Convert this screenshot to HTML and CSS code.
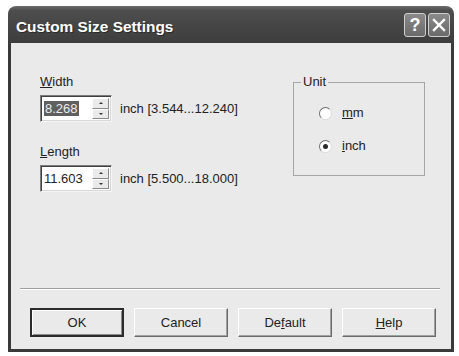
FILE: index.html
```html
<!DOCTYPE html>
<html lang="en">
<head>
  <meta charset="UTF-8" />
  <title>Custom Size Settings</title>
  <link rel="stylesheet" href="styles.css">
</head>
<body>
  <div class="window">
    <div class="titlebar">
      <span class="title">Custom Size Settings</span>
      <div class="caption-buttons">
        <span class="cap-btn help">?</span>
        <span class="cap-btn close">
          <svg width="14" height="14" viewBox="0 0 14 14"><path d="M2 2 L12 12 M12 2 L2 12" stroke="#fff" stroke-width="2.4" stroke-linecap="square"/></svg>
        </span>
      </div>
    </div>

    <div class="client">
      <div class="top">
        <div class="fields">
          <div class="label"><u>W</u>idth</div>
          <div class="field-row">
            <div class="spin-box">
              <span class="value selected">8.268</span>
              <div class="spinner"><span class="arrow up"></span><span class="arrow down"></span></div>
            </div>
            <span class="range">inch [3.544...12.240]</span>
          </div>

          <div class="label second"><u>L</u>ength</div>
          <div class="field-row">
            <div class="spin-box">
              <span class="value">11.603</span>
              <div class="spinner"><span class="arrow up"></span><span class="arrow down"></span></div>
            </div>
            <span class="range">inch [5.500...18.000]</span>
          </div>
        </div>

        <fieldset class="unit">
          <legend>Unit</legend>
          <div class="radio-row"><span class="radio"></span><span><u>m</u>m</span></div>
          <div class="radio-row"><span class="radio checked"></span><span><u>i</u>nch</span></div>
        </fieldset>
      </div>

      <div class="separator"></div>

      <div class="buttons">
        <button class="btn default-btn">OK</button>
        <button class="btn">Cancel</button>
        <button class="btn">De<u>f</u>ault</button>
        <button class="btn"><u>H</u>elp</button>
      </div>
    </div>
  </div>
</body>
</html>
```

FILE: styles.css
```css
body { margin: 0; background: #fff; font-family: "Liberation Sans", Arial, sans-serif; font-size: 13px; color: #222; }

.window { margin: 6px 0 0 8px; width: 446px; height: 346px; display: flex; flex-direction: column; }

.titlebar { height: 37px; flex: none; display: flex; justify-content: space-between; align-items: flex-start; padding: 0 4px 0 8px; border-radius: 8px 8px 0 0; background: linear-gradient(#6c6c6c 0, #4e4e4e 12%, #464646 50%, #3d3d3d 100%); }
.title { margin-top: 12px; color: #fff; font-weight: bold; font-size: 15.4px; line-height: 18px; text-shadow: 1px 1px 0 #2a2a2a; }
.caption-buttons { display: flex; gap: 2px; margin-top: 7px; }
.cap-btn { width: 22px; height: 24px; box-sizing: border-box; border: 1px solid #cfcfcf; border-radius: 3px; background: linear-gradient(#8a8a8a, #6a6a6a); display: flex; align-items: center; justify-content: center; color: #fff; font-weight: bold; font-size: 18px; }

.client { flex: 1; display: flex; flex-direction: column; background: #eaeaea; border: 3px solid #3a3a3a; border-top: none; }

.top { flex: 1; display: flex; padding: 31px 0 0 29px; }
.fields { width: 253px; }
.label { line-height: 16px; }
.label.second { margin-top: 22px; }
.field-row { display: flex; align-items: center; margin-top: 5px; }
.spin-box { width: 72px; height: 27px; box-sizing: border-box; display: flex; align-items: center; background: #fff; border: 1px solid; border-color: #7c7c7c #f4f4f4 #f4f4f4 #7c7c7c; box-shadow: inset 1px 1px 0 #404040, inset -1px -1px 0 #d8d8d8; padding: 2px 2px 2px 3px; }
.value { flex: 1; line-height: 15px; }
.value.selected { flex: none; width: 34px; background: #5f5f5f; color: #ececec; padding-left: 1px; }
.spinner { margin-left: auto; width: 17px; height: 100%; display: flex; flex-direction: column; }
.arrow { flex: 1; box-sizing: border-box; background: #eaeaea; border: 1px solid; border-color: #fff #8a8a8a #8a8a8a #fff; display: flex; align-items: center; justify-content: center; }
.arrow::after { content: ""; width: 0; height: 0; border-left: 2px solid transparent; border-right: 2px solid transparent; }
.arrow.up::after { border-bottom: 2px solid #333; }
.arrow.down::after { border-top: 2px solid #333; }
.range { margin-left: 8px; }

.unit { margin: 0; padding: 15px 0 0 0; width: 132px; height: 102px; box-sizing: border-box; min-width: 0; border: 1px solid #a6a6a6; }
.unit legend { margin-left: 7px; padding: 0 2px; line-height: 16px; }
.radio-row { display: flex; align-items: center; gap: 10px; line-height: 16px; padding-left: 25px; }
.radio-row + .radio-row { margin-top: 17px; }
.radio { width: 13px; height: 13px; box-sizing: border-box; border-radius: 50%; border: 1px solid; border-color: #6e6e6e #dcdcdc #dcdcdc #6e6e6e; background: #fff; display: flex; align-items: center; justify-content: center; }
.radio.checked::after { content: ""; width: 5px; height: 5px; border-radius: 50%; background: #2a2a2a; }

.separator { margin: 0 11px 0 9px; border-top: 1px solid #a0a0a0; border-bottom: 1px solid #fff; }

.buttons { display: flex; gap: 10px; margin: 18px 0 12px 19px; }
.btn { width: 94px; height: 29px; box-sizing: border-box; font-family: inherit; font-size: 13px; color: #222; background: #eaeaea; border: 1px solid; border-color: #fff #6a6a6a #6a6a6a #fff; box-shadow: inset -1px -1px 0 #a0a0a0; padding: 0; }
.btn.default-btn { border: 2px solid #2c2c2c; box-shadow: inset 1px 1px 0 #fff, inset -1px -1px 0 #8a8a8a; }
```
